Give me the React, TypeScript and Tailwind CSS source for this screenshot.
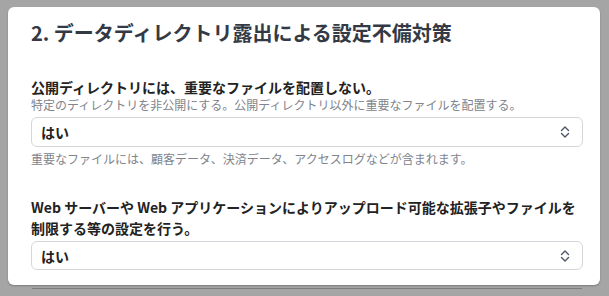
import React from "react";

// Up/down chevron used by the native-looking selects
const UpDownIcon: React.FC = () => (
  <svg
    width="10"
    height="14"
    viewBox="0 0 10 14"
    fill="none"
    stroke="#4b5563"
    strokeWidth="1.4"
    strokeLinecap="round"
    strokeLinejoin="round"
  >
    <path d="M1.5 5.5 L5 2 L8.5 5.5" />
    <path d="M1.5 8.5 L5 12 L8.5 8.5" />
  </svg>
);

interface SelectBoxProps {
  value: string;
  height: string;
}

const SelectBox: React.FC<SelectBoxProps> = ({ value, height }) => (
  <div
    className={`flex items-center justify-between rounded-md border border-[#d4d6dc] bg-white pl-[9px] pr-[12px] ${height}`}
  >
    <span className="text-[14px] font-bold text-[#222] leading-none">{value}</span>
    <UpDownIcon />
  </div>
);

export default function App() {
  return (
    <div
      className="min-h-[296px] bg-[#a5a5a5] pt-[7px] pl-[8px] pr-[9px] overflow-hidden"
      style={{ fontFamily: '"Noto Sans CJK JP", "Noto Sans", sans-serif' }}
    >
      <div className="rounded-md bg-white pl-[23px] pr-[17px] pt-[13px] pb-[15px] shadow-[0_1px_2px_rgba(0,0,0,0.25)]">
        <h2 className="text-[20px] font-bold leading-[26px] text-[#333a45]">
          2. データディレクトリ露出による設定不備対策
        </h2>

        <section className="mt-[32px]">
          <p className="text-[14px] font-bold leading-[19px] text-[#222]">
            公開ディレクトリには、重要なファイルを配置しない。
          </p>
          <p className="text-[12px] leading-[16px] text-[#80848c]">
            特定のディレクトリを非公開にする。公開ディレクトリ以外に重要なファイルを配置する。
          </p>
          <div className="mt-[4px]">
            <SelectBox value="はい" height="h-[30px]" />
          </div>
          <p className="mt-[4px] text-[12px] leading-[16px] text-[#80848c]">
            重要なファイルには、顧客データ、決済データ、アクセスログなどが含まれます。
          </p>
        </section>

        <section className="mt-[30px]">
          <p className="text-[14px] font-bold leading-[21px] text-[#222]">
            Web サーバーや Web アプリケーションによりアップロード可能な拡張子やファイルを制限する等の設定を行う。
          </p>
          <div className="mt-[2px]">
            <SelectBox value="はい" height="h-[29px]" />
          </div>
        </section>
      </div>
      <div className="mt-[3px] ml-[24px] mr-[18px] h-px bg-[#7d7d7d]" />
    </div>
  );
}
